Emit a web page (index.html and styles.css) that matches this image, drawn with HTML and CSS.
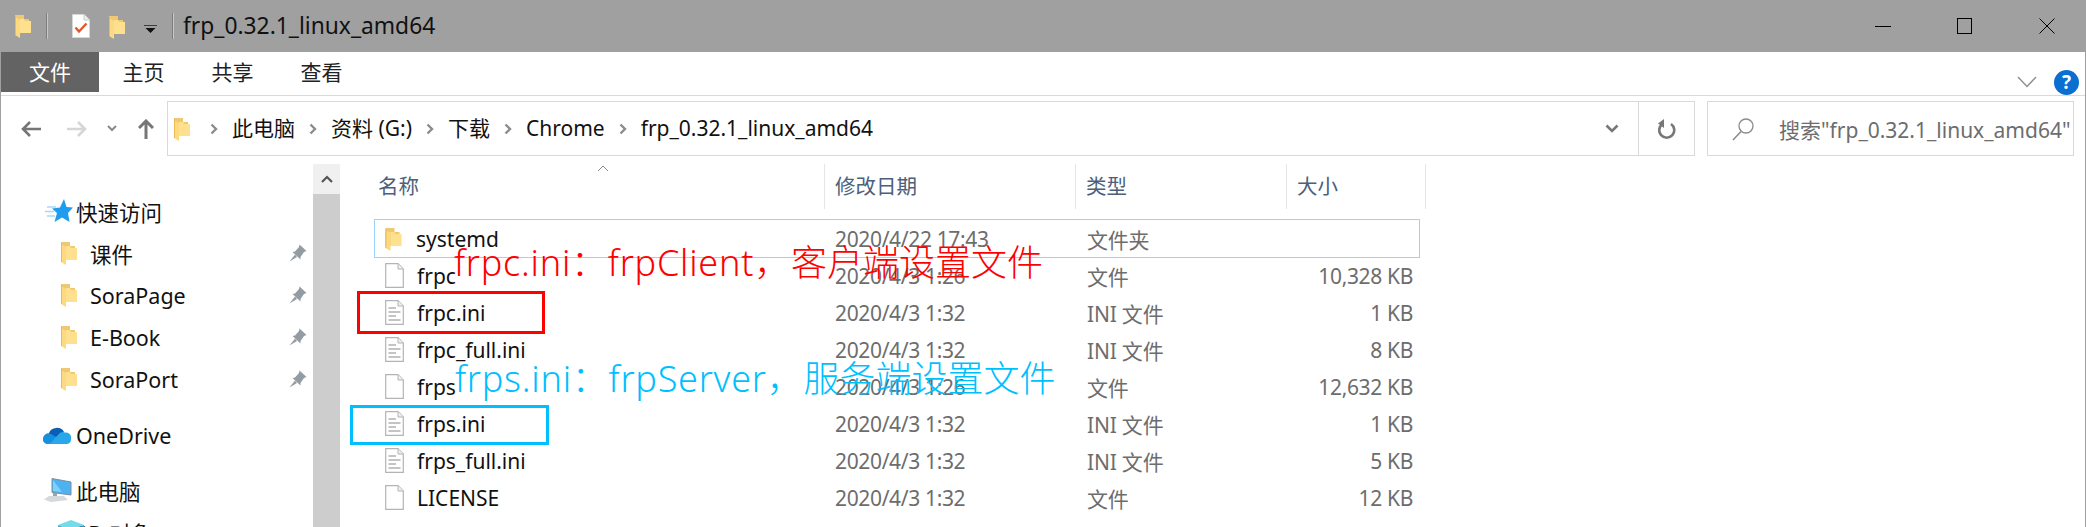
FILE: index.html
```html
<!DOCTYPE html>
<html lang="zh">
<head>
<meta charset="utf-8">
<title>frp_0.32.1_linux_amd64</title>
<link rel="stylesheet" href="styles.css">
</head>
<body>
<svg class="defs" width="0" height="0" aria-hidden="true">
  <defs>
    <symbol id="folder" viewBox="0 0 16 24">
      <path d="M0 1 H9 V5 H14 V19 H0Z" fill="#efc874"/>
      <path d="M5 5 H9 L10 7 H16 V19 H5Z" fill="#ffe08e"/>
      <path d="M0 3 L5 6 V24 L0 21Z" fill="#fdd97f"/>
      <path d="M.4 2 V21" stroke="#e3ae45" stroke-width=".8"/>
    </symbol>
    <symbol id="doc" viewBox="0 0 19 25">
      <path d="M.7.7 H13 L18.3 6 V24.3 H.7Z" fill="#fff" stroke="#b4b4b4" stroke-width="1.2"/>
      <path d="M13 .7 V6 H18.3" fill="#f0f0f0" stroke="#b4b4b4" stroke-width="1"/>
    </symbol>
    <symbol id="ini" viewBox="0 0 19 25">
      <path d="M.7.7 H13 L18.3 6 V24.3 H.7Z" fill="#fff" stroke="#b4b4b4" stroke-width="1.2"/>
      <path d="M13 .7 V6 H18.3" fill="#f0f0f0" stroke="#b4b4b4" stroke-width="1"/>
      <path d="M3.5 8 H11 M3.5 12 H15.5 M3.5 16 H11 M3.5 20 H15.5" stroke="#c4c4c4" stroke-width="2"/>
    </symbol>
    <symbol id="pin" viewBox="0 0 18 18">
      <path d="M10.5 .5 L17.5 7 L15 8 L11.5 13 L11.5 15.5 L3.5 8 L6 7.5 L10 3Z" fill="#949ca3"/>
      <path d="M6 10.5 L.5 17.5 L8 13Z" fill="#949ca3"/>
    </symbol>
    <symbol id="chev" viewBox="0 0 8 12">
      <path d="M1.5 1.5 L6 6 L1.5 10.5" fill="none" stroke="#8c8c8c" stroke-width="2.4"/>
    </symbol>
  </defs>
</svg>

<div class="window">
  <header class="titlebar">
    <svg class="ic-folder qa-first"><use href="#folder"/></svg>
    <span class="tb-sep"></span>
    <svg class="ic-check" viewBox="0 0 18 24">
      <path d="M.5.5 H12 L17.5 6 V23.5 H.5Z" fill="#fff" stroke="#d6d6d6"/>
      <path d="M12 .5 V6 H17.5" fill="#eee" stroke="#c8c8c8"/>
      <path d="M3.5 13.5 L7 17.5 L14.5 9.5" fill="none" stroke="#e8552a" stroke-width="2.4"/>
    </svg>
    <svg class="ic-folder qa-second"><use href="#folder"/></svg>
    <svg class="ic-qa" viewBox="0 0 13 8">
      <path d="M0 0 H13" stroke="#111" stroke-width="1.4"/>
      <path d="M1.5 3 H11.5 L6.5 8Z" fill="#111"/>
    </svg>
    <span class="tb-sep tb-sep-b"></span>
    <span class="title">frp_0.32.1_linux_amd64</span>
    <span class="winbtns">
      <svg class="wb" viewBox="0 0 16 16"><path d="M0 8.5 H16" stroke="#000" stroke-width="1"/></svg>
      <svg class="wb" viewBox="0 0 16 16"><rect x=".5" y=".5" width="14" height="15" fill="none" stroke="#000"/></svg>
      <svg class="wb" viewBox="0 0 16 16"><path d="M.5 .5 L15.5 15.5 M15.5 .5 L.5 15.5" stroke="#000" stroke-width="1"/></svg>
    </span>
  </header>

  <nav class="ribbon">
    <span class="tab tab-file">文件</span>
    <span class="tab">主页</span>
    <span class="tab">共享</span>
    <span class="tab">查看</span>
    <svg class="rib-chev" viewBox="0 0 20 12"><path d="M1 1 L10 10.5 L19 1" fill="none" stroke="#8f8f8f" stroke-width="1.4"/></svg>
    <svg class="help" viewBox="0 0 25 25">
      <circle cx="12.5" cy="12.5" r="12.5" fill="#0a6fd0"/>
      <text x="12.5" y="19" class="help-q">?</text>
    </svg>
  </nav>

  <div class="addrrow">
    <svg class="nav nav-back" viewBox="0 0 20 16"><path d="M9 1 L2 8 L9 15 M2 8 H20" fill="none" stroke="#767676" stroke-width="2.6"/></svg>
    <svg class="nav nav-fwd" viewBox="0 0 20 16"><path d="M11 1 L18 8 L11 15 M18 8 H0" fill="none" stroke="#d6d6d6" stroke-width="2.6"/></svg>
    <svg class="nav nav-down" viewBox="0 0 10 7"><path d="M1 1 L5 5 L9 1" fill="none" stroke="#8a8a8a" stroke-width="2"/></svg>
    <svg class="nav nav-up" viewBox="0 0 16 20"><path d="M1 9 L8 2 L15 9 M8 2 V20" fill="none" stroke="#767676" stroke-width="3"/></svg>
    <div class="addr">
      <svg class="ic-folder crumb-folder"><use href="#folder"/></svg>
      <svg class="crumb-chev"><use href="#chev"/></svg>
      <span class="crumb">此电脑</span>
      <svg class="crumb-chev"><use href="#chev"/></svg>
      <span class="crumb">资料 (G:)</span>
      <svg class="crumb-chev"><use href="#chev"/></svg>
      <span class="crumb">下载</span>
      <svg class="crumb-chev"><use href="#chev"/></svg>
      <span class="crumb">Chrome</span>
      <svg class="crumb-chev"><use href="#chev"/></svg>
      <span class="crumb">frp_0.32.1_linux_amd64</span>
      <svg class="addr-down" viewBox="0 0 14 9"><path d="M1.5 1.5 L7 7 L12.5 1.5" fill="none" stroke="#777" stroke-width="2.6"/></svg>
      <span class="refresh">
        <svg viewBox="0 0 18 20"><path d="M13 5 A7.5 7.5 0 1 1 4.5 5" fill="none" stroke="#777" stroke-width="2.6"/><path d="M6 0 V9 L0 4.5Z" fill="#777"/></svg>
      </span>
    </div>
    <div class="search">
      <svg class="search-ic" viewBox="0 0 22 24"><circle cx="14" cy="9" r="7" fill="none" stroke="#8a8a8a" stroke-width="1.3"/><path d="M9 14.5 L1 23" stroke="#8a8a8a" stroke-width="1.5"/></svg>
      <span class="search-text">搜索"frp_0.32.1_linux_amd64"</span>
    </div>
  </div>

  <main class="body">
    <aside class="sidebar">
      <div class="nav-item top">
        <svg class="ic-star" viewBox="0 0 28 24">
          <path d="M2 8 H11 M0 12.5 H9 M2 17 H10" stroke="#a6d8f7" stroke-width="1.5"/>
          <path d="M19 0 L21.5 8 L28 8.5 L23 14 L24.5 23 L17 18.5 L9.5 23 L12 14 L7 9.5 L15 8.5Z" fill="#1f9cf0"/>
        </svg>
        <span>快速访问</span>
      </div>
      <div class="nav-item child"><svg class="ic-folder"><use href="#folder"/></svg><span class="label">课件</span><svg class="ic-pin"><use href="#pin"/></svg></div>
      <div class="nav-item child"><svg class="ic-folder"><use href="#folder"/></svg><span class="label">SoraPage</span><svg class="ic-pin"><use href="#pin"/></svg></div>
      <div class="nav-item child"><svg class="ic-folder"><use href="#folder"/></svg><span class="label">E-Book</span><svg class="ic-pin"><use href="#pin"/></svg></div>
      <div class="nav-item child"><svg class="ic-folder"><use href="#folder"/></svg><span class="label">SoraPort</span><svg class="ic-pin"><use href="#pin"/></svg></div>
      <div class="nav-item top drive">
        <svg class="ic-cloud" viewBox="0 0 28 18">
          <path d="M6 7 A8 7 0 0 1 21 6 L12 15 L5 10Z" fill="#0a5fb4"/>
          <path d="M0 13 A5.5 5.5 0 0 1 7 7.5 L17 13 L11 18 H4 A4.5 4.5 0 0 1 0 13Z" fill="#1490df"/>
          <path d="M15 9 A6 6 0 0 1 22 6.5 A5.5 5.5 0 0 1 28 13.5 A4.5 4.5 0 0 1 24 18 H5 Q9 17 11 13Z" fill="#28a8ea"/>
        </svg>
        <span>OneDrive</span>
      </div>
      <div class="nav-item top pc">
        <svg class="ic-pc" viewBox="0 0 28 24">
          <path d="M8 .5 L27 4 V17 L8 14.5Z" fill="#4db2f2" stroke="#7d8e9c"/>
          <path d="M9 2 L18 14 L9 13Z" fill="#7fd0fa"/>
          <path d="M9 15 H13 V18 H9Z" fill="#9aa4ab"/>
          <path d="M5 18 L20 18 L24 22 L7 24 L0 21.5Z" fill="#d5d9dc"/>
        </svg>
        <span>此电脑</span>
      </div>
      <div class="nav-item top">
        <svg class="ic-3d" viewBox="0 0 26 20"><path d="M0 5 L13 0 L26 5 L13 10Z" fill="#74dce8"/><path d="M0 5 L13 10 V24 L0 18Z" fill="#3fb8d0"/><path d="M26 5 L13 10 V24 L26 18Z" fill="#2aa1c2"/></svg>
        <span>3D 对象</span>
      </div>
    </aside>
    <div class="scrollbar">
      <span class="sb-btn"><svg viewBox="0 0 12 8"><path d="M1 7 L6 2 L11 7" fill="none" stroke="#555" stroke-width="2.2"/></svg></span>
      <span class="sb-track"></span>
    </div>
    <section class="files">
      <svg class="sort" viewBox="0 0 12 7"><path d="M1 6 L6 1 L11 6" fill="none" stroke="#8a8a8a" stroke-width="1"/></svg>
      <div class="thead">
        <span class="th">名称</span>
        <span class="th">修改日期</span>
        <span class="th">类型</span>
        <span class="th">大小</span>
      </div>
      <div class="row focus">
        <span class="c-name"><svg class="ic-folder"><use href="#folder"/></svg>systemd</span>
        <span class="c-date">2020/4/22 17:43</span><span class="c-type">文件夹</span><span class="c-size"></span>
      </div>
      <div class="row">
        <span class="c-name"><svg class="ic-file"><use href="#doc"/></svg>frpc</span>
        <span class="c-date">2020/4/3 1:26</span><span class="c-type">文件</span><span class="c-size">10,328 KB</span>
      </div>
      <div class="row">
        <span class="c-name"><svg class="ic-file"><use href="#ini"/></svg>frpc.ini</span>
        <span class="c-date">2020/4/3 1:32</span><span class="c-type">INI 文件</span><span class="c-size">1 KB</span>
      </div>
      <div class="row">
        <span class="c-name"><svg class="ic-file"><use href="#ini"/></svg>frpc_full.ini</span>
        <span class="c-date">2020/4/3 1:32</span><span class="c-type">INI 文件</span><span class="c-size">8 KB</span>
      </div>
      <div class="row">
        <span class="c-name"><svg class="ic-file"><use href="#doc"/></svg>frps</span>
        <span class="c-date">2020/4/3 1:26</span><span class="c-type">文件</span><span class="c-size">12,632 KB</span>
      </div>
      <div class="row">
        <span class="c-name"><svg class="ic-file"><use href="#ini"/></svg>frps.ini</span>
        <span class="c-date">2020/4/3 1:32</span><span class="c-type">INI 文件</span><span class="c-size">1 KB</span>
      </div>
      <div class="row">
        <span class="c-name"><svg class="ic-file"><use href="#ini"/></svg>frps_full.ini</span>
        <span class="c-date">2020/4/3 1:32</span><span class="c-type">INI 文件</span><span class="c-size">5 KB</span>
      </div>
      <div class="row">
        <span class="c-name"><svg class="ic-file"><use href="#doc"/></svg>LICENSE</span>
        <span class="c-date">2020/4/3 1:32</span><span class="c-type">文件</span><span class="c-size">12 KB</span>
      </div>
    </section>
  </main>

  <div class="note note-red"><span class="note-lat">frpc.ini：frpClient，</span>客户端设置文件</div>
  <div class="note note-blue"><span class="note-lat">frps.ini：frpServer，</span>服务端设置文件</div>
  <div class="mark mark-red"></div>
  <div class="mark mark-blue"></div>
</div>
</body>
</html>
```

FILE: styles.css
```css
* { box-sizing: border-box; }
html, body { margin: 0; padding: 0; background: #fff; }
body { font-family: "Noto Sans", "Noto Sans CJK SC", sans-serif; overflow: hidden; }
.defs { position: absolute; }

.window {
  position: relative;
  width: 2086px;
  height: 527px;
  overflow: hidden;
  border-left: 1px solid #a0a0a0;
  border-right: 1px solid #a0a0a0;
  display: flex;
  flex-direction: column;
}

svg { display: block; flex: none; }
.ic-folder { width: 16px; height: 24px; }

/* title bar */
.titlebar {
  height: 52px;
  background: #a0a0a0;
  display: flex;
  align-items: center;
  padding-left: 14px;
  flex: none;
}
.tb-sep { width: 2px; height: 26px; background: #c8c8c8; border-left: 1px solid #7d7d7d; margin-left: 15px; }
.ic-check { width: 18px; height: 24px; margin-left: 24px; }
.qa-second { margin-left: 19px; margin-top: 2px; }
.ic-qa { width: 13px; height: 8px; margin-left: 19px; margin-top: 6px; }
.tb-sep-b { margin-left: 15px; }
.title { margin-left: 9px; font-size: 22.8px; color: #111; line-height: 1; }
.winbtns { margin-left: auto; display: flex; gap: 66px; padding-right: 30px; }
.wb { width: 16px; height: 16px; }

/* ribbon */
.ribbon {
  height: 44px;
  flex: none;
  border-bottom: 1px solid #dadada;
  display: flex;
  align-items: flex-start;
  padding-right: 6px;
}
.tab {
  height: 40px;
  width: 89px;
  font-size: 21px;
  line-height: 40px;
  text-align: center;
  color: #222;
}
.tab-file { width: 98px; background: #636363; color: #fff; }
.rib-chev { width: 20px; height: 12px; margin-left: auto; margin-top: 24px; }
.help { width: 25px; height: 25px; margin-left: 17px; margin-top: 18px; }
.help-q { fill: #fff; font-size: 19px; font-weight: 700; text-anchor: middle; font-family: "Noto Sans", sans-serif; }

/* address row */
.addrrow {
  height: 61px;
  flex: none;
  display: flex;
  align-items: center;
  padding: 5px 11px 1px 0;
}
.nav-back { width: 20px; height: 16px; margin-left: 20px; }
.nav-fwd { width: 20px; height: 16px; margin-left: 26px; }
.nav-down { width: 10px; height: 7px; margin-left: 20px; }
.nav-up { width: 16px; height: 20px; margin-left: 21px; }
.addr {
  margin-left: 13px;
  width: 1528px;
  height: 55px;
  border: 1px solid #d9d9d9;
  display: flex;
  align-items: center;
  padding-left: 6px;
  font-size: 21px;
  color: #111;
}
.crumb-folder { margin-right: 6px; }
.crumb-chev { width: 8px; height: 12px; margin: 0 14px; }
.crumb { line-height: 1; }
.addr-down { width: 14px; height: 9px; margin-left: auto; margin-right: 19px; }
.refresh {
  width: 56px;
  height: 100%;
  border-left: 1px solid #d9d9d9;
  display: flex;
  align-items: center;
  justify-content: center;
}
.refresh svg { width: 18px; height: 20px; }
.search {
  margin-left: 12px;
  flex: 1;
  height: 55px;
  border: 1px solid #d9d9d9;
  display: flex;
  align-items: center;
  padding-left: 24px;
  font-size: 21px;
  color: #6d6d6d;
  white-space: nowrap;
  overflow: hidden;
}
.search-ic { width: 22px; height: 24px; margin-right: 25px; }

/* body */
.body { flex: 1; display: flex; min-height: 0; }
.sidebar { width: 312px; padding-top: 33px; flex: none; }
.nav-item {
  height: 42px;
  display: flex;
  align-items: center;
  font-size: 21.5px;
  color: #111;
  white-space: nowrap;
}
.nav-item.top { padding-left: 75px; position: relative; }
.nav-item.child { padding-left: 60px; }
.child .label { margin-left: 13px; flex: 1; }
.ic-pin { width: 18px; height: 18px; margin-right: 6px; }
.ic-star { width: 28px; height: 24px; position: absolute; left: 44px; top: 9px; }
.ic-cloud { width: 28px; height: 18px; position: absolute; left: 42px; top: 12px; }
.ic-pc { width: 28px; height: 24px; position: absolute; left: 43px; top: 9px; }
.ic-3d { width: 26px; height: 20px; position: absolute; left: 57px; top: 9px; }
.drive { margin-top: 14px; }
.pc { margin-top: 13px; }

.scrollbar { width: 27px; flex: none; padding-top: 7px; display: flex; flex-direction: column; }
.sb-btn { height: 30px; background: #f0f0f0; display: flex; align-items: center; justify-content: center; flex: none; }
.sb-btn svg { width: 12px; height: 8px; }
.sb-track { flex: 1; background: #cdcdcd; }

.files { flex: 1; padding-left: 34px; position: relative; }
.sort { width: 12px; height: 7px; position: absolute; left: 257px; top: 8px; }
.thead {
  display: grid;
  grid-template-columns: 451px 251px 211px 139px;
  height: 45px;
  margin-top: 7px;
  margin-bottom: 10px;
}
.th {
  font-size: 20.5px;
  line-height: 45px;
  padding-left: 10px;
  color: #4c607a;
  border-right: 1px solid #e5e5e5;
}
.th:first-child { padding-left: 4px; }
.row {
  display: grid;
  grid-template-columns: 451px 251px 211px 133px;
  height: 37px;
  align-items: center;
  font-size: 21px;
  width: 1046px;
  border: 1px solid transparent;
}
.focus { border-color: #99d1ff; height: 39px; margin-bottom: -1px; }
.c-name { display: flex; align-items: center; color: #111; padding-left: 10px; gap: 13px; }
.c-name .ic-folder { width: 17px; margin-right: 1px; }
.ic-file { width: 19px; height: 25px; }
.c-date { color: #6d6d6d; padding-left: 9px; letter-spacing: -.35px; }
.c-type { color: #6d6d6d; padding-left: 10px; letter-spacing: -.2px; }
.c-size { color: #6d6d6d; text-align: right; padding-right: 8px; letter-spacing: -.35px; }

/* annotations on top of the shot */
.note { position: absolute; font-size: 36px; font-weight: 300; line-height: 1; white-space: nowrap; }
.note-lat { letter-spacing: .75px; }
.note-red { left: 453px; top: 245px; color: #f00; }
.note-blue { left: 454px; top: 361px; color: #00bfff; }
.mark { position: absolute; border-style: solid; border-width: 3px; }
.mark-red { left: 356px; top: 291px; width: 188px; height: 43px; border-color: #f00; }
.mark-blue { left: 349px; top: 405px; width: 199px; height: 40px; border-color: #00bfff; }
```
